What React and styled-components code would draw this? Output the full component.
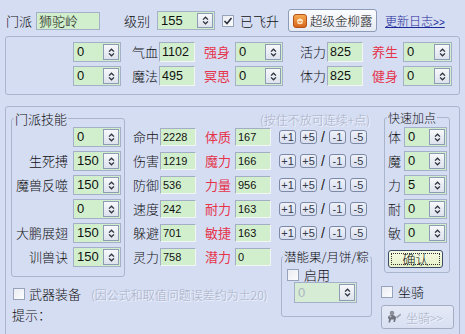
import React from 'react'
import styled, { createGlobalStyle } from 'styled-components'

const GlobalStyle = createGlobalStyle`
  html, body { margin: 0; padding: 0; background: #d5ddf3; }
  body {
    font-family: "Noto Sans CJK SC", "Liberation Sans", sans-serif;
    font-size: 13px;
    font-weight: 300;
    color: #111;
  }
`

const Window = styled.div`
  width: 465px;
  height: 334px;
  overflow: hidden;
  background: #d5ddf3;
`

const TopBar = styled.div`
  display: flex;
  align-items: center;
  height: 23px;
  padding: 9px 0 0 6px;
`

const Label = styled.span`
  font-size: 13px;
  line-height: 14px;
  white-space: nowrap;
  margin-left: ${p => p.$ml || 0}px;
  color: #111;
`

const NameBox = styled.div`
  width: 64px;
  height: 18px;
  margin-left: 4px;
  box-sizing: border-box;
  border: 1px solid #a3b0c8;
  background: #d2efcd;
  padding-left: 2px;
  font-size: 13px;
  line-height: 16px;
`

const CheckBox = styled.span`
  display: inline-flex;
  align-items: center;
  justify-content: center;
  width: 12px;
  height: 12px;
  box-sizing: border-box;
  margin-left: ${p => p.$ml || 0}px;
  border: 1px solid #97a3bb;
  background: linear-gradient(135deg, #e9ecf2, #fdfdfe);
`

const GoldButton = styled.div`
  display: flex;
  align-items: center;
  gap: 3px;
  width: 89px;
  height: 23px;
  box-sizing: border-box;
  margin-left: 9px;
  padding-left: 4px;
  border: 1px solid #8d9bb8;
  border-radius: 3px;
  background: linear-gradient(#fbfcfe, #e6eaf3);
  font-size: 12.5px;
  white-space: nowrap;
`

const LogLink = styled.span`
  margin-left: 8px;
  color: #1b2a98;
  text-decoration: underline;
  font-size: 12px;
  white-space: nowrap;
  small {
    font-family: "Liberation Sans", sans-serif;
    font-size: 10px;
  }
`

const TopGroup = styled.div`
  display: grid;
  grid-template-columns: 48px 38px 36px 40px 48px 44px 36px 40px 49px;
  grid-auto-rows: 20px;
  row-gap: 4px;
  align-items: center;
  width: 455px;
  height: 59px;
  box-sizing: border-box;
  margin: 4px 5px 0 5px;
  padding: 5px 0 0 67px;
  border: 1px solid #a9b4cd;
  border-radius: 3px;
`

const CellName = styled.span`
  font-size: 13px;
  line-height: 14px;
  white-space: nowrap;
  text-align: ${p => p.$align || 'right'};
  padding-left: ${p => p.$pl || 0}px;
  padding-right: ${p => (p.$align === 'left' ? 0 : 1)}px;
  color: ${p => (p.$red ? '#e5344a' : '#111')};
  font-weight: ${p => (p.$red ? 400 : 300)};
`

const ValueBox = styled.div`
  width: 36px;
  height: ${p => p.$h}px;
  box-sizing: border-box;
  border: 1px solid;
  border-color: #a4aec2 #f2f6f2 #f2f6f2 #a4aec2;
  background: #d2efcd;
  padding-left: 2px;
  font-family: "Liberation Sans", sans-serif;
  font-weight: 400;
  font-size: ${p => p.$fs}px;
  line-height: ${p => p.$h - 2}px;
`

const SpinFrame = styled.div`
  display: flex;
  width: ${p => p.$w}px;
  height: ${p => p.$h}px;
  box-sizing: border-box;
  margin-left: ${p => p.$ml || 0}px;
  border: 1px solid #a3b0c8;
  background: ${p => (p.$disabled ? '#d7ecd4' : '#d2efcd')};
`

const SpinValue = styled.span`
  flex: 1;
  padding-left: 3px;
  font-family: "Liberation Sans", sans-serif;
  font-weight: 400;
  font-size: 13px;
  line-height: ${p => p.$h - 2}px;
  color: ${p => (p.$disabled ? '#aab4c4' : '#111')};
`

const SpinButton = styled.span`
  display: flex;
  align-items: center;
  justify-content: center;
  width: 16px;
  margin: 1px;
  box-sizing: border-box;
  border: 1px solid #8e9bb5;
  background: linear-gradient(#f7f8fb, #dde2ec);
`

const MainFrame = styled.div`
  display: flex;
  width: 455px;
  height: 240px;
  box-sizing: border-box;
  margin: 11px 5px 0 5px;
  padding-left: 5px;
  border: 1px solid #a9b4cd;
  border-radius: 3px;
`

const LeftCol = styled.div`
  display: flex;
  flex-direction: column;
  width: 268px;
`

const UpperPart = styled.div`
  display: flex;
  align-items: flex-start;
`

const GroupBox = styled.fieldset`
  width: ${p => p.$w}px;
  height: ${p => p.$h}px;
  box-sizing: border-box;
  margin: ${p => p.$mt || 0}px 0 0 ${p => p.$ml || 0}px;
  padding: 0;
  min-inline-size: 0;
  border: 1px solid #a9b4cd;
  border-radius: 3px;
  display: flex;
  flex-direction: column;
`

const Legend = styled.legend`
  margin-left: ${p => p.$ml || 2}px;
  padding: 0 1px;
  font-size: ${p => p.$fs || 13}px;
  line-height: ${p => p.$lh || 13}px;
  white-space: nowrap;
`

const SkillRow = styled.div`
  display: flex;
  align-items: center;
  justify-content: flex-end;
  gap: 5px;
  height: 24px;
  padding-right: 3px;
`

const StatsCol = styled.div`
  display: flex;
  flex-direction: column;
  margin-left: 6px;
  padding-top: 18px;
`

const StatRow = styled.div`
  display: grid;
  grid-template-columns: 29px 36px 39px 36px;
  align-items: center;
  height: 24px;
`

const WeaponRow = styled.div`
  display: flex;
  align-items: center;
  gap: 4px;
  height: 14px;
  margin-top: 10px;
  padding-left: 2px;
`

const Embossed = styled.span`
  font-size: 12px;
  line-height: 13px;
  white-space: nowrap;
  color: #a6afc6;
  text-shadow: 1px 1px 0 #f4f6fc;
  margin-left: ${p => p.$ml || 0}px;
`

const HintRow = styled.div`
  margin-top: 7px;
  padding-left: 1px;
  font-size: 13px;
  line-height: 14px;
`

const MidCol = styled.div`
  display: flex;
  flex-direction: column;
  width: 94px;
`

const PressHint = styled.div`
  height: 18px;
  box-sizing: border-box;
  padding-top: 3px;
  margin-left: -19px;
`

const StepRow = styled.div`
  display: flex;
  align-items: center;
  gap: 4px;
  height: 24px;
`

const StepButton = styled.span`
  width: 17px;
  height: 14px;
  box-sizing: border-box;
  border: 1px solid #7d8aa6;
  border-radius: 3px;
  background: linear-gradient(#eef1f8, #d9dff0);
  font-family: "Liberation Sans", sans-serif;
  font-weight: 400;
  font-size: 11px;
  line-height: 12px;
  text-align: center;
  color: #333a48;
`

const Slash = styled.span`
  width: 4px;
  font-family: "Liberation Sans", sans-serif;
  font-size: 14px;
  line-height: 14px;
  color: #222;
`

const CheckRow = styled.div`
  display: flex;
  align-items: center;
  gap: 5px;
  height: 14px;
  margin-top: ${p => p.$mt || 0}px;
  padding-left: ${p => p.$pl || 0}px;
`

const RightCol = styled.div`
  display: flex;
  flex-direction: column;
  width: 74px;
  margin-left: 8px;
`

const QuickRow = styled.div`
  display: flex;
  align-items: center;
  gap: 3px;
  height: 24px;
  padding-left: 3px;
`

const ConfirmButton = styled.div`
  width: 55px;
  height: 18px;
  box-sizing: border-box;
  margin: 5px 0 0 3px;
  border: 1px solid #3e4b66;
  border-radius: 3px;
  background: linear-gradient(#f6fbe4, #e6f2c8);
  outline: 1px dotted #333;
  outline-offset: -4px;
  font-size: 13px;
  line-height: 15px;
  text-align: center;
`

const MountButton = styled.div`
  display: flex;
  align-items: center;
  gap: 4px;
  width: 73px;
  height: 24px;
  box-sizing: border-box;
  margin-top: 6px;
  padding-left: 4px;
  border: 1px solid #a3adc3;
  border-radius: 3px;
  background: linear-gradient(#e4e9f6, #d9e0f2);
`

const Chevrons = () => (
  <svg width="7" height="9" viewBox="0 0 7 9">
    <path d="M1 3.6 L3.5 1.2 L6 3.6 M1 5.4 L3.5 7.8 L6 5.4" fill="none" stroke="#2b303c" strokeWidth="1.3" />
  </svg>
)

function Spinner({ value, w, h = 20, ml, disabled }) {
  return (
    <SpinFrame $w={w} $h={h} $ml={ml} $disabled={disabled}>
      <SpinValue $h={h} $disabled={disabled}>{value}</SpinValue>
      <SpinButton><Chevrons /></SpinButton>
    </SpinFrame>
  )
}

const Tick = () => (
  <svg width="10" height="10" viewBox="0 0 10 10">
    <path d="M1.5 5 L4 7.5 L8.5 2" fill="none" stroke="#2a3040" strokeWidth="1.6" />
  </svg>
)

const BottleIcon = () => (
  <svg width="14" height="14" viewBox="0 0 14 14">
    <defs>
      <linearGradient id="gold" x1="0" y1="0" x2="0" y2="1">
        <stop offset="0" stopColor="#f7ad55" />
        <stop offset="1" stopColor="#d7641a" />
      </linearGradient>
    </defs>
    <rect x="0.5" y="0.5" width="13" height="13" rx="2.5" fill="url(#gold)" stroke="#b4531a" />
    <path d="M4 6 Q7 3 10 6 L9.5 9.5 Q7 11 4.5 9.5 Z" fill="#fde7c2" />
    <path d="M5.5 7.5 Q7 8.8 8.5 7.5" fill="none" stroke="#d7641a" strokeWidth="0.9" />
  </svg>
)

const MountIcon = () => (
  <svg width="16" height="14" viewBox="0 0 16 14">
    <circle cx="6" cy="3" r="2.3" fill="#8c8f97" />
    <path d="M2 7 Q3 4.5 6.5 5 Q10 5.5 10 8 L9 12 L7.5 12 L7.8 9.5 L5 9.5 L4 12.5 L2.5 12.5 L3 9 Q1.5 8.5 2 7 Z" fill="#6f737d" />
    <path d="M10 7 L14.5 3.5 L15 5 L11 8.5 Z" fill="#9a9ea8" />
    <circle cx="4.5" cy="6.5" r="1" fill="#b9bcc4" />
  </svg>
)

const topRows = [
  ['气血', '1102', '强身', '活力', '825', '养生'],
  ['魔法', '495', '冥思', '体力', '825', '健身'],
]

const skills = [
  ['', '0'],
  ['生死搏', '150'],
  ['魔兽反噬', '150'],
  ['', '0'],
  ['大鹏展翅', '150'],
  ['训兽诀', '150'],
]

const stats = [
  ['命中', '2228', '体质', '167'],
  ['伤害', '1219', '魔力', '166'],
  ['防御', '536', '力量', '956'],
  ['速度', '242', '耐力', '163'],
  ['躲避', '701', '敏捷', '163'],
  ['灵力', '758', '潜力', '0'],
]

const quick = [['体', '0'], ['魔', '0'], ['力', '5'], ['耐', '0'], ['敏', '0']]

export default function App() {
  return (
    <Window>
      <GlobalStyle />
      <TopBar>
        <Label>门派</Label>
        <NameBox>狮驼岭</NameBox>
        <Label $ml={24}>级别</Label>
        <Spinner value="155" w={58} h={19} ml={7} />
        <CheckBox $ml={7}><Tick /></CheckBox>
        <Label $ml={6}>已飞升</Label>
        <GoldButton><BottleIcon />超级金柳露</GoldButton>
        <LogLink>更新日志<small>&gt;&gt;</small></LogLink>
      </TopBar>

      <TopGroup>
        {topRows.map(r => (
          <React.Fragment key={r[0]}>
            <Spinner value="0" w={48} />
            <CellName>{r[0]}</CellName>
            <ValueBox $h={20} $fs={12.5}>{r[1]}</ValueBox>
            <CellName $red $align="center" $pl={5}>{r[2]}</CellName>
            <Spinner value="0" w={48} />
            <CellName>{r[3]}</CellName>
            <ValueBox $h={20} $fs={12.5}>{r[4]}</ValueBox>
            <CellName $red $align="center" $pl={5}>{r[5]}</CellName>
            <Spinner value="0" w={49} />
          </React.Fragment>
        ))}
      </TopGroup>

      <MainFrame>
        <LeftCol>
          <UpperPart>
            <GroupBox $w={114} $h={165} $mt={5}>
              <Legend>门派技能</Legend>
              {skills.map((s, i) => (
                <SkillRow key={i}>
                  {s[0] && <Label>{s[0]}</Label>}
                  <Spinner value={s[1]} w={48} />
                </SkillRow>
              ))}
            </GroupBox>
            <StatsCol>
              {stats.map(s => (
                <StatRow key={s[0]}>
                  <CellName $align="left" $pl={2}>{s[0]}</CellName>
                  <ValueBox $h={18} $fs={11}>{s[1]}</ValueBox>
                  <CellName $red $align="center" $pl={6}>{s[2]}</CellName>
                  <ValueBox $h={18} $fs={11}>{s[3]}</ValueBox>
                </StatRow>
              ))}
            </StatsCol>
          </UpperPart>
          <WeaponRow>
            <CheckBox />
            <Label>武器装备</Label>
            <Embossed $ml={6}>(因公式和取值问题误差约为±20)</Embossed>
          </WeaponRow>
          <HintRow>提示：</HintRow>
        </LeftCol>

        <MidCol>
          <PressHint><Embossed>(按住不放可连续+点)</Embossed></PressHint>
          {[0, 1, 2, 3, 4].map(i => (
            <StepRow key={i}>
              <StepButton>+1</StepButton>
              <StepButton>+5</StepButton>
              <Slash>/</Slash>
              <StepButton>-1</StepButton>
              <StepButton>-5</StepButton>
            </StepRow>
          ))}
          <GroupBox $w={91} $h={67} $mt={5} $ml={2}>
            <Legend $fs={12.5} $ml={1}>潜能果/月饼/粽</Legend>
            <CheckRow $mt={5} $pl={5}>
              <CheckBox />
              <Label>启用</Label>
            </CheckRow>
            <Spinner value="0" w={63} h={21} ml={12} disabled />
          </GroupBox>
        </MidCol>

        <RightCol>
          <GroupBox $w={66} $h={163} $mt={3} $ml={3}>
            <Legend $fs={12} $lh={15}>快速加点</Legend>
            {quick.map(q => (
              <QuickRow key={q[0]}>
                <Label>{q[0]}</Label>
                <Spinner value={q[1]} w={43} />
              </QuickRow>
            ))}
            <ConfirmButton>确认</ConfirmButton>
          </GroupBox>
          <CheckRow $mt={12}>
            <CheckBox />
            <Label>坐骑</Label>
          </CheckRow>
          <MountButton>
            <MountIcon />
            <Embossed>坐骑&gt;&gt;</Embossed>
          </MountButton>
        </RightCol>
      </MainFrame>
    </Window>
  )
}
